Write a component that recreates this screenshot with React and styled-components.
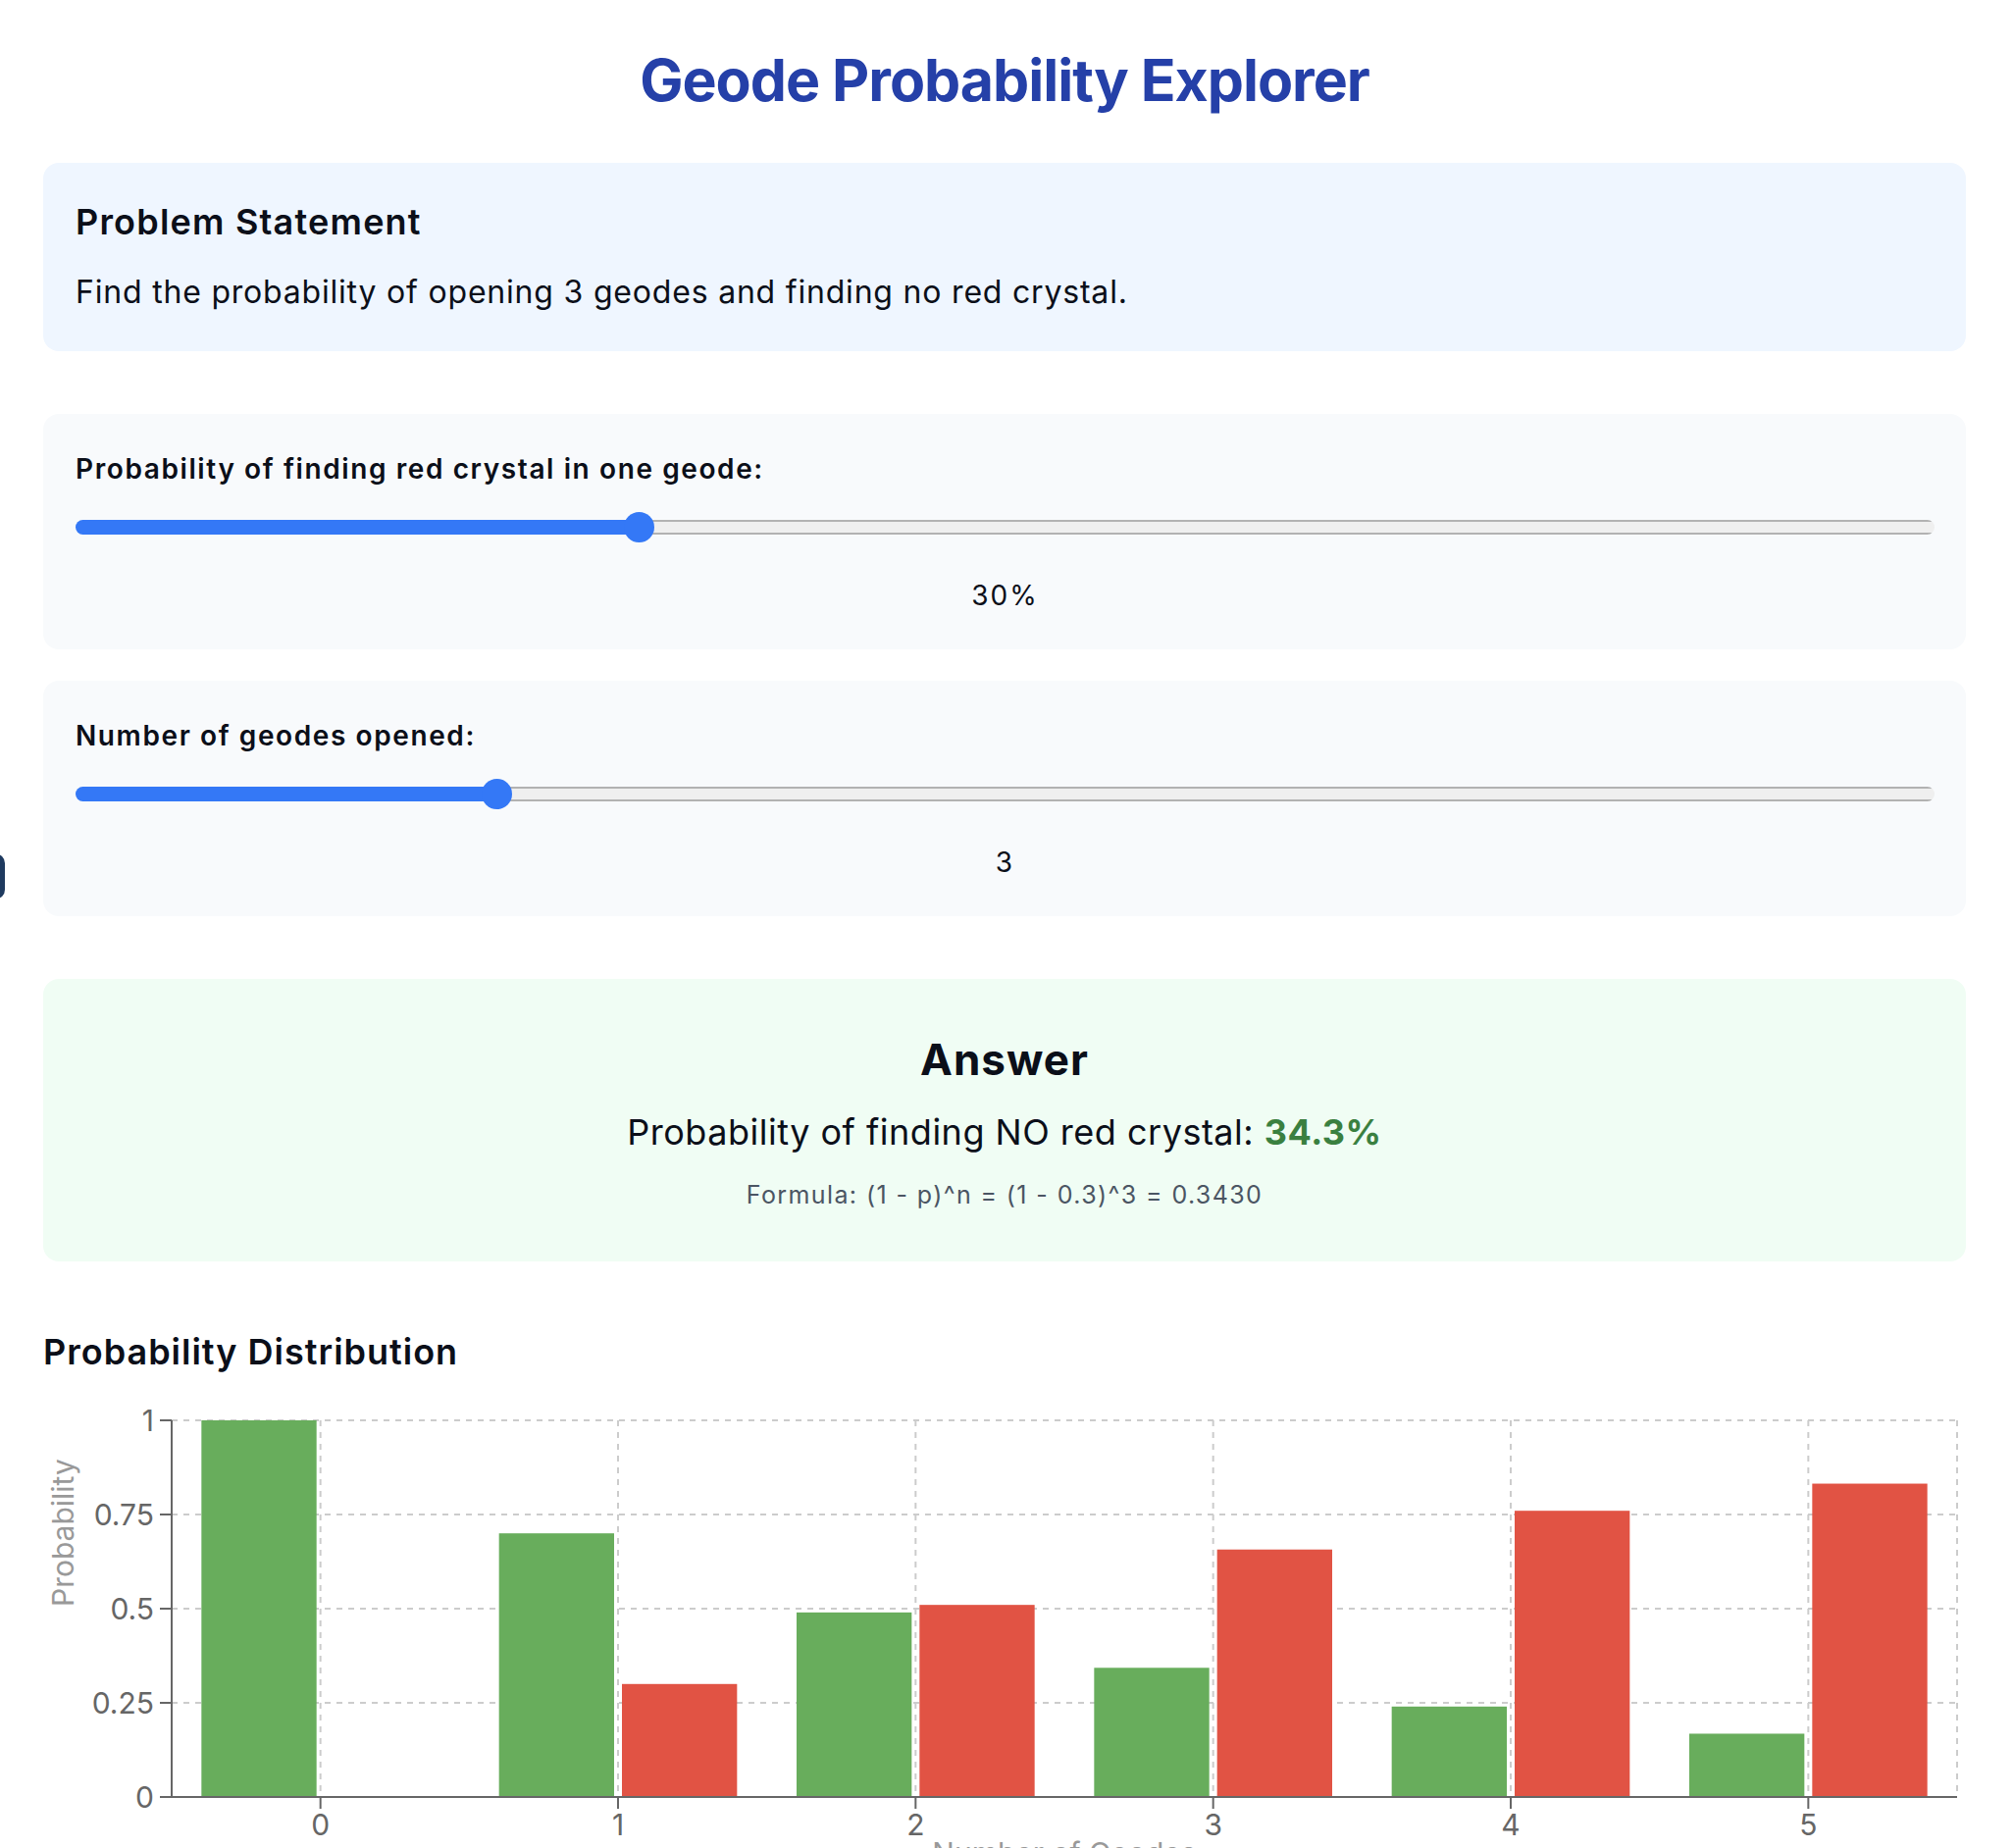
import React, { useState } from 'react'
import styled, { createGlobalStyle } from 'styled-components'

const GlobalStyle = createGlobalStyle`
  body {
    margin: 0;
    background: #ffffff;
    font-family: Inter, "Noto Sans", sans-serif;
    color: #0b0f19;
  }
`

const Page = styled.div`
  padding: 46px 48px 0 44px;
`

const Title = styled.h1`
  margin: 0 0 48px;
  text-align: center;
  font-size: 59px;
  line-height: 72px;
  font-weight: 700;
  letter-spacing: -1px;
  color: #2540a8;
`

const tones = {
  blue: '#eff6ff',
  gray: '#f8fafc',
  green: '#f0fdf4'
}

const Card = styled.section`
  background: ${(p) => tones[p.$tone]};
  border-radius: 16px;
`

const ProblemCard = styled(Card)`
  padding: 32px 32px 36px 33px;
`

const SectionTitle = styled.h2`
  margin: 0 0 20px;
  font-size: 36px;
  line-height: 56px;
  font-weight: 600;
  letter-spacing: 1.2px;
`

const Statement = styled.p`
  margin: 0;
  font-size: 32px;
  line-height: 48px;
  letter-spacing: 0.8px;
`

const Controls = styled.div`
  margin-top: 64px;
  display: flex;
  flex-direction: column;
  gap: 32px;
`

const SliderCard = styled(Card)`
  padding: 36px 32px 35px 33px;
`

const SliderLabel = styled.label`
  display: block;
  margin-bottom: 24px;
  font-size: 28px;
  line-height: 40px;
  font-weight: 600;
  letter-spacing: 1.6px;
`

const Range = styled.input`
  -webkit-appearance: none;
  appearance: none;
  display: block;
  width: 100%;
  height: 31px;
  margin: 0;
  background: transparent;

  &::-webkit-slider-runnable-track {
    height: 15px;
    border-radius: 8px;
    background:
      linear-gradient(#3478f6, #3478f6) 0 0 / var(--fill) 100% no-repeat,
      linear-gradient(#b2b2b2 2px, #efefef 2px, #efefef calc(100% - 2px), #b2b2b2 calc(100% - 2px));
  }

  &::-webkit-slider-thumb {
    -webkit-appearance: none;
    appearance: none;
    width: 31px;
    height: 31px;
    margin-top: -8px;
    border: none;
    border-radius: 50%;
    background: #3478f6;
  }
`

const SliderValue = styled.div`
  margin-top: 34px;
  text-align: center;
  font-size: 28px;
  line-height: 40px;
  letter-spacing: 2px;
`

const AnswerCard = styled(Card)`
  margin-top: 64px;
  padding: 50px 32px 52px;
  text-align: center;
`

const AnswerTitle = styled.h2`
  margin: 0;
  font-size: 44px;
  line-height: 64px;
  font-weight: 700;
  letter-spacing: 1px;
`

const AnswerLine = styled.p`
  margin: 14px 0 0;
  font-size: 36px;
  line-height: 56px;
  letter-spacing: 0.5px;
`

const Highlight = styled.span`
  color: #3a8040;
  font-weight: 700;
`

const Formula = styled.p`
  margin: 20px 0 0;
  font-size: 25px;
  line-height: 32px;
  letter-spacing: 1.4px;
  color: #4b5563;
`

const ChartSection = styled.section`
  margin-top: 64px;
`

const ChartTitle = styled.h2`
  margin: 0 0 24px;
  font-size: 36px;
  line-height: 56px;
  font-weight: 600;
  letter-spacing: 1px;
`

const ChartSvg = styled.svg`
  display: block;
  overflow: visible;
  font-family: Inter, "Noto Sans", sans-serif;
`

const TickText = styled.text`
  font-size: 30px;
  fill: #666666;
`

const AxisLabel = styled.text`
  font-size: 30px;
  fill: #999999;
`

const SideTab = styled.div`
  position: fixed;
  left: -40px;
  top: 870px;
  width: 45px;
  height: 47px;
  border-radius: 10px;
  background: #1e3a5f;
`

// chart geometry, in svg coordinates
const W = 1960
const H = 520
const LEFT = 131
const RIGHT = 1951
const TOP = 18
const BOTTOM = 402
const GREEN = '#68ad5c'
const RED = '#e15344'

function DistributionChart({ p }) {
  const data = [0, 1, 2, 3, 4, 5].map((n) => {
    const none = Math.pow(1 - p, n)
    return { n, none, some: 1 - none }
  })
  const catW = (RIGHT - LEFT) / data.length
  const pad = catW * 0.1
  const gap = 8
  const barW = (catW - pad * 2 - gap) / 2
  const yOf = (v) => BOTTOM - v * (BOTTOM - TOP)
  const yTicks = [0, 0.25, 0.5, 0.75, 1]

  return (
    <ChartSvg width={W} height={H}>
      {/* grid */}
      <g stroke="#cccccc" strokeWidth="2" strokeDasharray="6 6" fill="none">
        {yTicks.slice(1).map((v) => (
          <line key={v} x1={LEFT} x2={RIGHT} y1={yOf(v)} y2={yOf(v)} />
        ))}
        {data.map((d, i) => {
          const cx = LEFT + catW * (i + 0.5)
          return <line key={d.n} x1={cx} x2={cx} y1={TOP} y2={BOTTOM} />
        })}
        <line x1={RIGHT} x2={RIGHT} y1={TOP} y2={BOTTOM} />
      </g>

      {/* bars */}
      {data.map((d, i) => {
        const x0 = LEFT + catW * i + pad
        return (
          <g key={d.n}>
            <rect x={x0} y={yOf(d.none)} width={barW} height={BOTTOM - yOf(d.none)} fill={GREEN} />
            <rect x={x0 + barW + gap} y={yOf(d.some)} width={barW} height={BOTTOM - yOf(d.some)} fill={RED} />
          </g>
        )
      })}

      {/* axes */}
      <g stroke="#666666" strokeWidth="2">
        <line x1={LEFT} x2={LEFT} y1={TOP} y2={BOTTOM} />
        <line x1={LEFT} x2={RIGHT} y1={BOTTOM} y2={BOTTOM} />
        {yTicks.map((v) => (
          <line key={v} x1={LEFT - 12} x2={LEFT} y1={yOf(v)} y2={yOf(v)} />
        ))}
        {data.map((d, i) => {
          const cx = LEFT + catW * (i + 0.5)
          return <line key={d.n} x1={cx} x2={cx} y1={BOTTOM} y2={BOTTOM + 12} />
        })}
      </g>

      {yTicks.map((v) => (
        <TickText key={v} x={LEFT - 18} y={yOf(v) + 11} textAnchor="end">
          {v}
        </TickText>
      ))}
      {data.map((d, i) => (
        <TickText key={d.n} x={LEFT + catW * (i + 0.5)} y={BOTTOM + 39} textAnchor="middle">
          {d.n}
        </TickText>
      ))}

      <AxisLabel transform={`translate(31, ${BOTTOM - 194}) rotate(-90)`} textAnchor="start">
        Probability
      </AxisLabel>
      <AxisLabel x={(LEFT + RIGHT) / 2} y={BOTTOM + 68} textAnchor="middle">
        Number of Geodes
      </AxisLabel>
    </ChartSvg>
  )
}

function Slider({ label, min, max, value, onChange, display }) {
  const frac = (value - min) / (max - min)
  // fill reaches the thumb centre (thumb is 31px wide)
  const fill = `calc(15.5px + ${frac} * (100% - 31px))`
  return (
    <SliderCard $tone="gray">
      <SliderLabel>{label}</SliderLabel>
      <Range
        type="range"
        min={min}
        max={max}
        value={value}
        onChange={(e) => onChange(Number(e.target.value))}
        style={{ '--fill': fill }}
      />
      <SliderValue>{display}</SliderValue>
    </SliderCard>
  )
}

export default function App() {
  const [percent, setPercent] = useState(30)
  const [geodes, setGeodes] = useState(3)

  const p = percent / 100
  const answer = Math.pow(1 - p, geodes)

  return (
    <>
      <GlobalStyle />
      <SideTab />
      <Page>
        <Title>Geode Probability Explorer</Title>

        <ProblemCard $tone="blue">
          <SectionTitle>Problem Statement</SectionTitle>
          <Statement>
            Find the probability of opening {geodes} geodes and finding no red crystal.
          </Statement>
        </ProblemCard>

        <Controls>
          <Slider
            label="Probability of finding red crystal in one geode:"
            min={0}
            max={100}
            value={percent}
            onChange={setPercent}
            display={`${percent}%`}
          />
          <Slider
            label="Number of geodes opened:"
            min={1}
            max={10}
            value={geodes}
            onChange={setGeodes}
            display={geodes}
          />
        </Controls>

        <AnswerCard $tone="green">
          <AnswerTitle>Answer</AnswerTitle>
          <AnswerLine>
            Probability of finding NO red crystal: <Highlight>{(answer * 100).toFixed(1)}%</Highlight>
          </AnswerLine>
          <Formula>
            Formula: (1 - p)^n = (1 - {p})^{geodes} = {answer.toFixed(4)}
          </Formula>
        </AnswerCard>

        <ChartSection>
          <ChartTitle>Probability Distribution</ChartTitle>
          <DistributionChart p={p} />
        </ChartSection>
      </Page>
    </>
  )
}
